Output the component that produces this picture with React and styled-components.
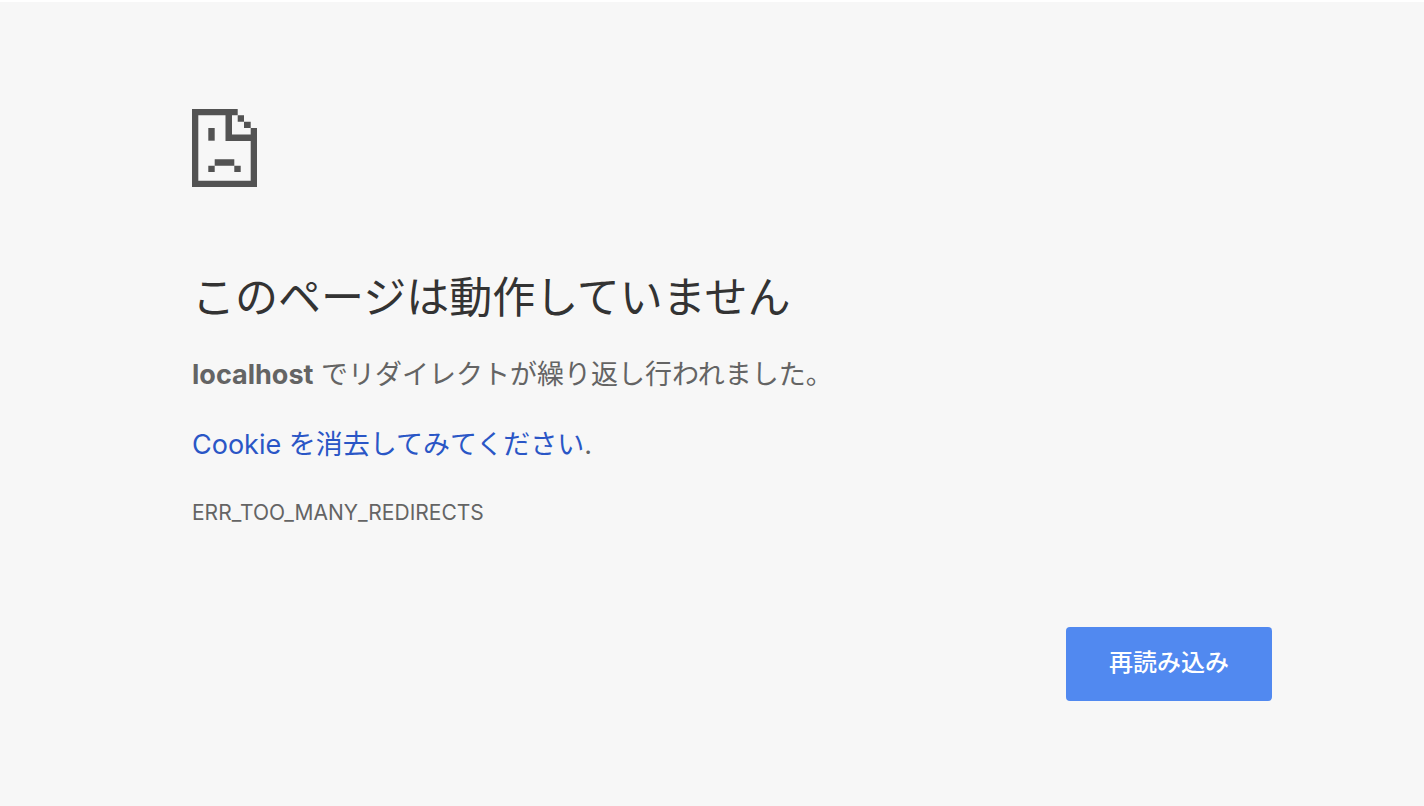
import styled, { createGlobalStyle } from 'styled-components';

const GlobalStyle = createGlobalStyle`
  * {
    box-sizing: border-box;
  }
  body {
    margin: 0;
    background: #f7f7f7;
    color: #646464;
    font-family: Inter, 'Noto Sans CJK JP', sans-serif;
    font-size: 27px;
    line-height: 40px;
  }
`;

// Styled components for the error page
const Page = styled.main`
  min-height: 100vh;
  padding: 107px 152px 40px 192px;
  border-top: 2px solid #fff;
`;

const Content = styled.div`
  max-width: 1080px;
  display: flex;
  flex-direction: column;
`;

const SadPage = styled.svg`
  width: 65px;
  height: 78px;
  fill: #535353;
`;

const Heading = styled.h1`
  margin: 78px 0 26px;
  color: #333;
  font-size: 43px;
  font-weight: 400;
  line-height: 64px;
`;

const Message = styled.p`
  margin: 0 0 30px;
`;

const HelpLink = styled.a`
  color: #2a56c6;
  text-decoration: none;
`;

const ErrorCode = styled.div`
  font-size: 21px;
  line-height: 36px;
`;

const Buttons = styled.div`
  display: flex;
  justify-content: flex-end;
  margin-top: 96px;
`;

const ReloadButton = styled.button`
  padding: 16px 43px 18px;
  border: 0;
  border-radius: 4px;
  background: #5189f0;
  color: #fff;
  font-family: inherit;
  font-size: 24px;
  font-weight: 500;
  line-height: 40px;
  cursor: pointer;
`;

const App = () => (
  <>
    <GlobalStyle />
    <Page>
      <Content>
        <SadPage viewBox="0 0 65 78" aria-hidden="true">
          {/* sheet outline with the folded corner */}
          <path
            fillRule="evenodd"
            d="M0 0H45.7V6.3H40V25.5H58.7V19H65V78H0ZM6.3 6.3V71.7H58.7V32H33.5V6.3Z"
          />
          <path d="M45.7 6.3H52V12.7H58.7V19H52V12.7H45.7Z" />
          {/* eye and mouth */}
          <path d="M16.3 19H22.7V31.7H16.3Z" />
          <path d="M22.7 50.3H42.3V56.7H48.7V63H42.3V56.7H22.7V63H16.3V56.7H22.7Z" />
        </SadPage>
        <Heading>このページは動作していません</Heading>
        <Message>
          <strong>localhost</strong> でリダイレクトが繰り返し行われました。
        </Message>
        <Message>
          <HelpLink href="#cookies">Cookie を消去してみてください</HelpLink>.
        </Message>
        <ErrorCode>ERR_TOO_MANY_REDIRECTS</ErrorCode>
        <Buttons>
          <ReloadButton type="button">再読み込み</ReloadButton>
        </Buttons>
      </Content>
    </Page>
  </>
);

export default App;
